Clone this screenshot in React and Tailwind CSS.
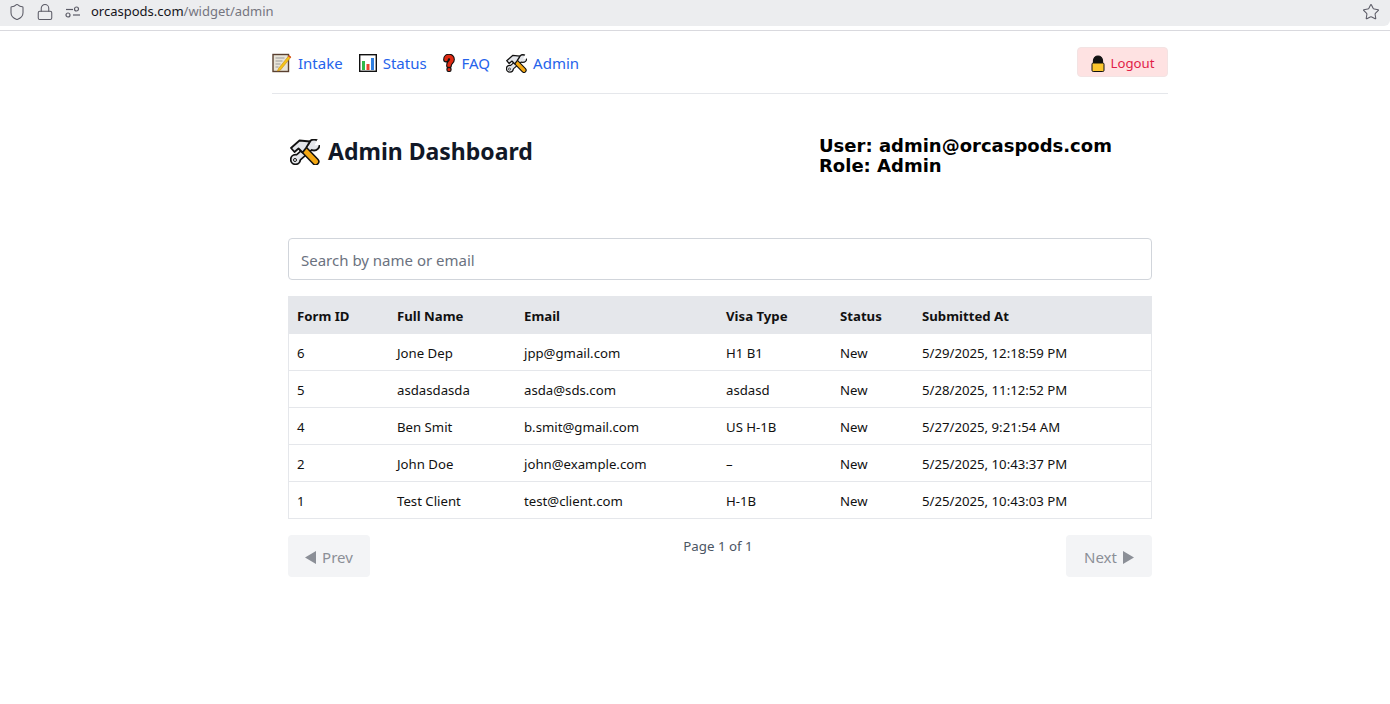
import React from "react";
import { Shield, Lock, Star } from "lucide-react";

const rows = [
  ["6", "Jone Dep", "jpp@gmail.com", "H1 B1", "New", "5/29/2025, 12:18:59 PM"],
  ["5", "asdasdasda", "asda@sds.com", "asdasd", "New", "5/28/2025, 11:12:52 PM"],
  ["4", "Ben Smit", "b.smit@gmail.com", "US H-1B", "New", "5/27/2025, 9:21:54 AM"],
  ["2", "John Doe", "john@example.com", "–", "New", "5/25/2025, 10:43:37 PM"],
  ["1", "Test Client", "test@client.com", "H-1B", "New", "5/25/2025, 10:43:03 PM"],
];

const headers = ["Form ID", "Full Name", "Email", "Visa Type", "Status", "Submitted At"];

const MemoIcon = () => (
  <svg viewBox="0 0 20 20" className="w-[20px] h-[20px] shrink-0">
    <rect x="1" y="1.5" width="15.5" height="17" fill="#e8e4d8" stroke="#5a4030" strokeWidth="1.4" />
    <path d="M3.5 5h9M3.5 8h7M3.5 11h5M3.500 14h3" stroke="#9a9a9a" strokeWidth="1.2" />
    <path d="M6.500 15.500l10.500-13 2 1.500-10.500 13-3 1z" fill="#f5c518" stroke="#c98a10" strokeWidth="0.6" />
    <path d="M16.300 3.500l.8-1 2 1.500-.8 1z" fill="#d9362a" />
  </svg>
);

const ChartIcon = () => (
  <svg viewBox="0 0 18 18" className="w-[18px] h-[18px] shrink-0">
    <rect x="0.7" y="0.7" width="16.6" height="16.6" fill="#fff" stroke="#111" strokeWidth="1.4" />
    <rect x="3" y="7" width="3" height="9" fill="#2fb84a" />
    <rect x="7.5" y="10" width="3" height="6" fill="#e8442e" />
    <rect x="12" y="4" width="3" height="12" fill="#2f7fe0" />
  </svg>
);

const QuestionIcon = () => (
  <svg viewBox="0 0 13 18" className="w-[13px] h-[18px] shrink-0" fill="none" strokeLinecap="round">
    <path d="M3 5.500C3 3.300 4.500 2.500 6 2.500s3 1 3 3c0 2.500-3 2.700-3 6" stroke="#111" strokeWidth="5.800" />
    <path d="M3 5.500C3 3.300 4.500 2.500 6 2.500s3 1 3 3c0 2.500-3 2.700-3 6" stroke="#e02a12" strokeWidth="3.600" />
    <circle cx="6" cy="15.500" r="2.100" fill="#e02a12" stroke="#111" strokeWidth="1.100" />
  </svg>
);

const ToolsIcon = ({ className }) => (
  <svg viewBox="0 0 30 26" className={className} fill="none">
    {/* wrench */}
    <path d="M6 20.500L23 5.500" stroke="#111" strokeWidth="8" />
    <circle cx="24" cy="6" r="5.500" fill="#e4e6ea" stroke="#111" strokeWidth="1.800" />
    <circle cx="5.500" cy="20.500" r="4.800" fill="#e4e6ea" stroke="#111" strokeWidth="1.800" />
    <path d="M6 20.500L23 5.500" stroke="#e4e6ea" strokeWidth="4.800" />
    <path d="M24.500 6.500L27 1h3v5z" fill="#fff" />
    <circle cx="5" cy="21" r="1.500" fill="#fff" stroke="#111" strokeWidth="1" />
    {/* hammer */}
    <path d="M12 8.500L25.500 22.500" stroke="#111" strokeWidth="8" strokeLinecap="round" />
    <path d="M12 8.500L25.500 22.500" stroke="#f3a712" strokeWidth="5" strokeLinecap="round" />
    <path d="M1 9L9.500 1.500 20 2.500 16 9 12.500 13.500 8.500 9.500 4.500 13z" fill="#e4e6ea" stroke="#111" strokeWidth="1.800" strokeLinejoin="round" />
  </svg>
);

const LockIcon = () => (
  <svg viewBox="0 0 14 17" className="w-[14px] h-[17px] shrink-0">
    <path d="M2.500 8V5.500a4.500 4.500 0 0 1 9 0V8z" fill="#111" stroke="#111" strokeWidth="1.200" />
    <rect x="1" y="8" width="12" height="8.500" rx="1.200" fill="#fcc52e" stroke="#111" strokeWidth="1" />
  </svg>
);

const SiteInfoIcon = () => (
  <svg viewBox="0 0 16 12" className="w-[16px] h-[12px] shrink-0" fill="none" stroke="#5b5b66" strokeWidth="1.200">
    <path d="M1 3.500h7" />
    <circle cx="11.500" cy="3" r="2" />
    <circle cx="3" cy="9" r="2" />
    <path d="M8 9h7" />
  </svg>
);

const NavLink = ({ icon, label }) => (
  <a href="#" className="flex items-center gap-[6px] text-[#2563eb] text-[15px]">
    {icon}
    <span>{label}</span>
  </a>
);

const App = () => {
  return (
    <div className="min-h-[704px] bg-white font-['Noto_Sans',sans-serif]">
      {/* browser bar */}
      <div className="h-[31px] border-b border-[#d9d9de]">
        <div className="h-[26px] bg-[#ecedef] rounded-br-md flex items-center pl-[8px] pr-[10px] pb-[2px]">
          <Shield className="w-[18px] h-[18px] text-[#5b5b66]" strokeWidth={1.400} />
          <Lock className="w-[18px] h-[18px] text-[#5b5b66] ml-[10px]" strokeWidth={1.400} />
          <div className="ml-[11px]">
            <SiteInfoIcon />
          </div>
          <span className="ml-[10px] text-[13px] text-[#15141a]">
            orcaspods.com<span className="text-[#75757f]">/widget/admin</span>
          </span>
          <Star className="w-[18px] h-[18px] text-[#5b5b66] ml-auto" strokeWidth={1.400} />
        </div>
      </div>

      <div className="w-[896px] ml-[272px]">
        {/* nav */}
        <nav className="h-[63px] border-b border-[#e5e7eb] flex items-center justify-between">
          <div className="flex items-center gap-[16px] pt-[2px]">
            <NavLink icon={<MemoIcon />} label="Intake" />
            <NavLink icon={<ChartIcon />} label="Status" />
            <NavLink icon={<QuestionIcon />} label="FAQ" />
            <NavLink icon={<ToolsIcon className="w-[21px] h-[19px] shrink-0" />} label="Admin" />
          </div>
          <button className="h-[30px] w-[91px] mt-[-1px] pt-[4px] flex items-center justify-center gap-[6px] bg-[#fee2e2] border border-[#f3e3e3] rounded text-[13.200px] text-[#e11d48]">
            <LockIcon />
            Logout
          </button>
        </nav>

        <div className="px-[16px]">
          {/* heading */}
          <div className="flex items-start justify-between pt-[37px] h-[144px]">
            <h1 className="flex items-center gap-[8px] ml-[2px] text-[23px] leading-[41px] font-bold text-[#111827]">
              <ToolsIcon className="w-[30px] h-[26px] shrink-0" />
              Admin Dashboard
            </h1>
            <div className="w-[333px] pt-[5px] font-['DejaVu_Sans',sans-serif] font-bold text-[18px] leading-[20px] text-black">
              <div>User: admin@orcaspods.com</div>
              <div>Role: Admin</div>
            </div>
          </div>

          {/* search */}
          <input
            placeholder="Search by name or email"
            className="w-full h-[42px] px-[12px] pt-[2px] border border-[#d1d5db] rounded text-[15px] placeholder:text-[#6b7280] outline-none"
          />

          {/* table */}
          <div className="mt-[16px] border border-[#e5e7eb] border-t-0">
            <table className="w-full text-[13.200px] text-[#111] table-fixed">
              <thead>
                <tr className="bg-[#e5e7eb] h-[38px]">
                  <th className="w-[100px] text-left font-bold px-[8px] pt-[4px]">{headers[0]}</th>
                  <th className="w-[127px] text-left font-bold px-[8px] pt-[4px]">{headers[1]}</th>
                  <th className="w-[202px] text-left font-bold px-[8px] pt-[4px]">{headers[2]}</th>
                  <th className="w-[114px] text-left font-bold px-[8px] pt-[4px]">{headers[3]}</th>
                  <th className="w-[82px] text-left font-bold px-[8px] pt-[4px]">{headers[4]}</th>
                  <th className="text-left font-bold px-[8px] pt-[4px]">{headers[5]}</th>
                </tr>
              </thead>
              <tbody>
                {rows.map((row, i) => (
                  <tr key={i} className="h-[37px] first:h-[36px] border-t border-[#e5e7eb] first:border-t-0">
                    {row.map((cell, j) => (
                      <td key={j} className="px-[8px] pt-[5px]">
                        {cell}
                      </td>
                    ))}
                  </tr>
                ))}
              </tbody>
            </table>
          </div>

          {/* pagination */}
          <div className="mt-[16px] flex items-start justify-between">
            <button disabled className="w-[82px] h-[42px] pt-[2px] flex items-center justify-center gap-[6px] bg-[#f3f4f6] rounded text-[15px] text-[#8b8f97]">
              <svg viewBox="0 0 11 13" className="w-[11px] h-[13px] shrink-0">
                <path d="M0 6.500L11 0v13z" fill="#8b8f97" />
              </svg>
              <span>Prev</span>
            </button>
            <span className="mt-[2px] text-[13.300px] text-[#4b5563]">Page 1 of 1</span>
            <button disabled className="w-[86px] h-[42px] pt-[2px] flex items-center justify-center gap-[6px] bg-[#f3f4f6] rounded text-[15px] text-[#8b8f97]">
              <span>Next</span>
              <svg viewBox="0 0 11 13" className="w-[11px] h-[13px] shrink-0">
                <path d="M11 6.500L0 0v13z" fill="#8b8f97" />
              </svg>
            </button>
          </div>
        </div>
      </div>
    </div>
  );
};

export default App;
